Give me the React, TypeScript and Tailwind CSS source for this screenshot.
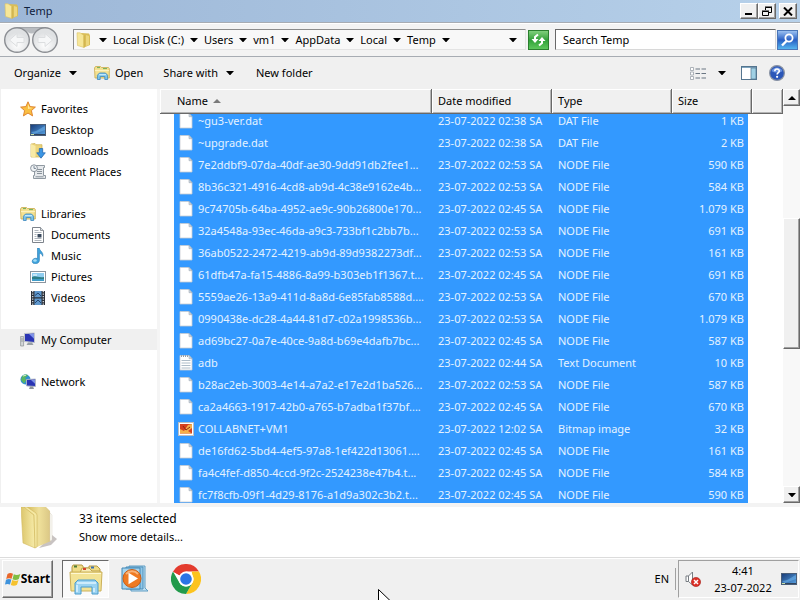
import { useEffect, useRef, type ReactNode } from "react";
import clsx from "clsx";

const raised =
  "bg-[#f0f0f0] border border-t-white border-l-white border-r-[#696969] border-b-[#696969] shadow-[inset_-1px_-1px_0_#a0a0a0]";

// --- Icons ---

const Caret = ({ dir = "down" }: { dir?: "down" | "up" }) => (
  <svg width="8" height="4" viewBox="0 0 8 4" className="shrink-0" aria-hidden>
    <path d={dir === "down" ? "M0 0h8L4 4.4z" : "M4 0l4 4H0z"} fill="#000" />
  </svg>
);

const SmallFolderIcon = () => (
  <svg width="15" height="16" viewBox="0 0 15 16" className="shrink-0" aria-hidden>
    <path d="M5 1l8 .5 1 2V13l-6 2.500z" fill="#d9bd58" />
    <path d="M10 3l3 1v9l-3 1z" fill="#ecd67c" />
    <path d="M1 .8h3L8 3.500v12L1.500 13.500z" fill="#f6e698" stroke="#dbc264" strokeWidth=".6" />
    <path d="M8 3.500v12" stroke="#c9a93f" strokeWidth=".8" />
  </svg>
);

const LargeFolderIcon = () => (
  <svg width="36" height="43" viewBox="0 0 36 43" className="shrink-0" aria-hidden>
    <defs>
      <linearGradient id="folderBack" x1="0" x2="1">
        <stop offset="0" stopColor="#d6bc5c" />
        <stop offset=".5" stopColor="#efe09a" />
        <stop offset="1" stopColor="#d9c583" />
      </linearGradient>
      <linearGradient id="folderFront" x1="0" x2="1">
        <stop offset="0" stopColor="#dcc66c" />
        <stop offset="1" stopColor="#f7ecaa" />
      </linearGradient>
    </defs>
    <path d="M18 41l12-3 6-6-5-4z" fill="#867a78" opacity=".45" />
    <path d="M6 0h19l4 4 1 30-14 6z" fill="url(#folderBack)" />
    <path d="M29 6l2 2v25l-2 1z" fill="#fbfbf6" stroke="#d3cdbd" strokeWidth=".4" />
    <path d="M0 0h3l10 8 1 33L2 36z" fill="url(#folderFront)" stroke="#d3bb60" strokeWidth=".6" />
    <path d="M6 0l9 6 1 2v32l-2 1-1-33L3 0z" fill="#f5e8a2" stroke="#cbb157" strokeWidth=".5" />
  </svg>
);

const LibraryIcon = () => (
  <svg width="16" height="16" viewBox="0 0 16 16" className="shrink-0" aria-hidden>
    <path d="M.5 3l1-1.5h5l1 1h7l.8 1V13H1z" fill="#f4e191" stroke="#c8ab4c" strokeWidth=".8" />
    <path d="M3 2.6h3M9 3.6h4" stroke="#6fae5b" strokeWidth="1" />
    <path d="M1 5.6h14" stroke="#fff6c4" />
    <path d="M3.4 14.5v-4.3L5.5 8h6l2.1 2.2v4.3h-2.8v-3H6.2v3z" fill="#7cc4ea" stroke="#3a86bd" strokeWidth=".8" />
    <path d="M5 9.7h7" stroke="#d3f0ff" />
  </svg>
);

const StarIcon = () => (
  <svg width="16" height="16" viewBox="0 0 16 16" className="shrink-0" aria-hidden>
    <path d="M8 .8l2.1 4.8 5.3.5-4 3.5 1.2 5.3L8 12.1l-4.6 2.8 1.2-5.3-4-3.5 5.3-.5z" fill="#f9bf42" stroke="#dd7d26" strokeWidth=".9" />
    <path d="M8 3l1.4 3.6 3.3.4L8 8z" fill="#ffeaa0" />
  </svg>
);

const DesktopIcon = () => (
  <svg width="16" height="12" viewBox="0 0 16 12" className="shrink-0" aria-hidden>
    <defs>
      <linearGradient id="desk" x1="0" x2="1" y2="1">
        <stop offset="0" stopColor="#173a76" />
        <stop offset="1" stopColor="#5aa5e6" />
      </linearGradient>
    </defs>
    <rect x=".5" y=".5" width="15" height="11" fill="url(#desk)" stroke="#4a5e78" />
    <path d="M1 8C6 8 9 5 15 2v4L4 10z" fill="#6cb0ea" opacity=".6" />
    <path d="M1 10.5h14" stroke="#31435c" />
    <path d="M1 10.5h3" stroke="#c8e0a8" />
  </svg>
);

const DownloadsIcon = () => (
  <svg width="16" height="16" viewBox="0 0 16 16" className="shrink-0" aria-hidden>
    <path d="M1 1l4-.5 1 1.2h6V14H1z" fill="#ecd57c" stroke="#cdb052" strokeWidth=".7" />
    <path d="M1 1l4.5 2v12L1 13.5z" fill="#f8eaa6" />
    <path d="M9.3 5.5h3.4v4.3h2.6L11 15.2 6.7 9.8h2.6z" fill="#3b96e4" stroke="#1c62ad" strokeWidth=".7" />
  </svg>
);

const RecentIcon = () => (
  <svg width="16" height="16" viewBox="0 0 16 16" className="shrink-0" aria-hidden>
    <path d="M4.5 1.5h10v2h-1v8h2v3h-12v-3h1z" fill="#e6e9ec" stroke="#858e97" strokeWidth=".9" />
    <path d="M7 5.5h5M7 7.5h5M7 9.5h5M5.5 12.8h8" stroke="#7f8992" strokeWidth=".9" />
    <circle cx="4" cy="4.2" r="3.4" fill="#f1f4f6" stroke="#8b949d" />
    <path d="M4 2v2.4h2" stroke="#5e6f80" strokeWidth=".8" fill="none" />
  </svg>
);

const DocumentsIcon = () => (
  <svg width="16" height="16" viewBox="0 0 16 16" className="shrink-0" aria-hidden>
    <path d="M2.5.5h8l3 3v12h-11z" fill="#fff" stroke="#7d838b" />
    <path d="M10.500 .5v3h3" fill="#d8dde2" stroke="#7d838b" strokeWidth=".8" />
    <path d="M4.500 3.500h4M4.500 5.500h7M4.500 7.500h2M4.500 9.500h2M4.500 11.500h7M4.500 13.500h7" stroke="#9aa3ac" strokeWidth=".8" />
    <path d="M7.500 7h4v3.500h-4z" fill="#3a4a5e" />
  </svg>
);

const MusicIcon = () => (
  <svg width="16" height="16" viewBox="0 0 16 16" className="shrink-0" aria-hidden>
    <path d="M7.500 0h1.700c.3 3 4.600 4 3.500 8.300-.4-2-1.700-2.700-3.300-3v6.900c0 4.200-7 4.700-7.200 1.300-.1-2.700 3-3.800 5.300-3z" fill="#3fa3dc" stroke="#2578b4" strokeWidth=".6" />
    <ellipse cx="5" cy="12.500" rx="1.800" ry="1.200" fill="#a3ddf7" />
  </svg>
);

const PicturesIcon = () => (
  <svg width="16" height="14" viewBox="0 0 16 14" className="shrink-0" aria-hidden>
    <rect x=".5" y="1.500" width="15" height="11" fill="#fff" stroke="#8b959f" />
    <rect x="2" y="3" width="12" height="8" fill="#8fcdf0" />
    <path d="M2 7c4-2 6 1 12 0v4H2z" fill="#2e7f88" />
    <path d="M2 9h12v2H2z" fill="#3f9cc8" />
    <path d="M3 5h4" stroke="#fff" />
  </svg>
);

const VideosIcon = () => (
  <svg width="16" height="16" viewBox="0 0 16 16" className="shrink-0" aria-hidden>
    <rect x="1" y="1" width="14" height="14" fill="#2b3038" />
    <path d="M2.700 1v14M13.300 1v14" stroke="#d6dbe0" strokeWidth="1.300" strokeDasharray="1.300 1.200" />
    <path d="M4.500 1h7v6.300h-7zM4.500 8.500h7V15h-7z" fill="#5f97cc" />
    <path d="M5 5.500L8 3l3 3M5 13l3-3 3 3" stroke="#24466e" fill="none" />
  </svg>
);

const ComputerIcon = () => (
  <svg width="16" height="16" viewBox="0 0 16 16" className="shrink-0" aria-hidden>
    <path d="M.6 4.500h3v9.500h-3z" fill="#d3d6d8" stroke="#8b9094" strokeWidth=".7" />
    <path d="M1 7h2M1 9h2" stroke="#6f757a" strokeWidth=".6" />
    <path d="M4.500 1.500l10-.5v9.500l-10-1z" fill="#2a34b4" stroke="#c0c5cc" />
    <path d="M9 2l5-.3v5z" fill="#7e92e8" />
    <path d="M8 10.500h4l1.500 2.500h-7z" fill="#989fa6" />
  </svg>
);

const NetworkIcon = () => (
  <svg width="16" height="16" viewBox="0 0 16 16" className="shrink-0" aria-hidden>
    <circle cx="5.500" cy="5.500" r="5" fill="#2f8fd0" />
    <path d="M2 2.500C4 0 7 0 8 1.500L5 4l1.500 2L4 9.500 1 6z" fill="#59b562" />
    <path d="M3 2l3-.8" stroke="#d5f3d2" />
    <path d="M6.500 5.500l9-.5v7.500l-9-.6z" fill="#2a34b4" stroke="#b3bac4" strokeWidth=".9" />
    <path d="M11 6l4-.3v4z" fill="#7e92e8" />
    <path d="M10 12.500h3l1 2.500H9z" fill="#8f969d" />
  </svg>
);

type FileKind = "file" | "text" | "bitmap";

const FileIcon = ({ kind }: { kind: FileKind }) => {
  if (kind === "bitmap") {
    return (
      <svg width="16" height="16" viewBox="0 0 16 16" className="shrink-0" aria-hidden>
        <rect x=".5" y="1.500" width="15" height="13" fill="#fff" stroke="#b9bdc2" />
        <rect x="2" y="3" width="12" height="9.500" fill="#d5401f" />
        <path d="M2 8l4 2 4-6 4-1v4l-4 3 4 2.500H2z" fill="#f4b04a" />
        <path d="M5 5l3 4 4-3" stroke="#8e2414" fill="none" />
      </svg>
    );
  }
  return (
    <svg width="16" height="16" viewBox="0 0 16 16" className="shrink-0" aria-hidden>
      <path d="M2 .5h9l3 3.200v11.300H2z" fill="#fff" stroke="#c8ccd2" strokeWidth=".8" />
      <path d="M11 .5v3.200h3z" fill="#cfd9e4" stroke="#a3abb5" strokeWidth=".6" />
      {kind === "text" && (
        <>
          <path d="M3.500 5.500h9M3.500 8h9M3.500 10.500h9M3.500 13h9" stroke="#a5b4c2" strokeWidth=".9" />
          <path d="M3 1.200h8" stroke="#707a85" strokeWidth="1.200" strokeDasharray="1 1" />
        </>
      )}
    </svg>
  );
};

const NavArrows = () => (
  <svg width="56" height="28" viewBox="0 0 56 28" aria-hidden>
    <defs>
      <radialGradient id="orb" cy=".7">
        <stop offset="0" stopColor="#fff" />
        <stop offset="1" stopColor="#dfe1e3" />
      </radialGradient>
    </defs>
    <path d="M14 1.500h29c-8 0-10 6-14.500 6S22 1.500 14 1.500z" fill="#b9bcc0" />
    <path d="M14 1.500h29" stroke="#a5a8ac" />
    <circle cx="14" cy="14" r="12.300" fill="url(#orb)" stroke="#8b8e93" strokeWidth="1.400" />
    <circle cx="42" cy="14" r="12.300" fill="url(#orb)" stroke="#8b8e93" strokeWidth="1.400" />
    <path d="M6.500 14L14 7.500v4h7v5h-7v4zM49.500 14L42 7.500v4h-7v5h7v4z" fill="#f6f7f8" stroke="#dcdee0" />
  </svg>
);

const WindowsFlag = () => (
  <svg width="16" height="15" viewBox="0 0 16 15" className="shrink-0" aria-hidden>
    <path d="M2.500 2C4.500.8 6 .8 8 1.800L6.600 6.800C4.800 6 3 6 1.200 7z" fill="#e8672b" />
    <path d="M8.800 2.200c2 1 4 1 6.500-.2L13.800 7c-2 1.200-4.300 1.200-6.300.2z" fill="#7fbd42" />
    <path d="M1 7.800c1.700-1 3.600-1 5.400-.2L5 12.600c-1.800-1-3.500-.8-5 0z" fill="#3f93dc" />
    <path d="M7.200 8c2 1 4.200 1 6.300-.1L12 12.800c-2 1.200-4.200 1.200-6.200.2z" fill="#f5c22e" />
  </svg>
);

const ExplorerIcon = () => (
  <svg width="34" height="32" viewBox="0 0 34 32" aria-hidden>
    <path d="M3 9V4l1-2h9l2 3h5V3h8l3 3v5H3z" fill="#efdc86" stroke="#b79a45" />
    <path d="M11 10l2-5h7l3 3h8v3H11z" fill="#f7ecb4" stroke="#bfa24b" />
    <path d="M5 3.500h3" stroke="#4c7d36" strokeWidth="2" />
    <path d="M14 6h3" stroke="#d5432c" strokeWidth="2" />
    <path d="M22 4.500h3" stroke="#3a71b4" strokeWidth="2" />
    <path d="M1 9h32l-1 19H2z" fill="#f3e395" stroke="#cbb05a" />
    <path d="M2 10.500h30" stroke="#fff8d2" />
    <path d="M6 31V20l3-3h17l3 3v11h-6v-7H12v7z" fill="#9bd3f1" stroke="#4a9ccc" />
    <path d="M8 20h19M8 22v7M25 25v4" stroke="#e0f5ff" strokeWidth="1.500" />
  </svg>
);

const MediaPlayerIcon = () => (
  <svg width="30" height="28" viewBox="0 0 30 28" aria-hidden>
    <path d="M8 1h16v22l3 3H10z" fill="#bfe0f2" stroke="#5e9dc4" />
    <path d="M5 2h17v22H5z" fill="#92c8e8" stroke="#4c8fbb" />
    <path d="M1 3h18v21H1z" fill="#a7d5ef" stroke="#4388b6" />
    <circle cx="11" cy="13.500" r="9" fill="#ef7a22" stroke="#c95d16" />
    <path d="M5 9a8 8 0 0112 0" stroke="#f9b277" strokeWidth="2" fill="none" />
    <path d="M7.500 7.800L17 13.500l-9.500 5.700z" fill="#fff" />
  </svg>
);

const ChromeIcon = () => (
  <svg width="30" height="30" viewBox="0 0 48 48" aria-hidden>
    <circle cx="24" cy="24" r="24" fill="#fff" />
    <path d="M3.200 12A24 24 0 0144.800 12H24a12 12 0 00-10.400 6z" fill="#e33b2e" />
    <path d="M44.800 12A24 24 0 0124 48l10.400-18A12 12 0 0034.400 18L33 12z" fill="#fcc31e" />
    <path d="M24 48A24 24 0 013.200 12l10.400 18A12 12 0 0034.400 30z" fill="#229a4b" />
    <path d="M3.200 12h41.600H24v6l-10.400 0z" fill="#e33b2e" />
    <circle cx="24" cy="24" r="12" fill="#fff" />
    <circle cx="24" cy="24" r="9.300" fill="#2a74e6" />
  </svg>
);

const MutedSpeakerIcon = () => (
  <svg width="16" height="16" viewBox="0 0 16 16" aria-hidden>
    <path d="M1 5h2.500L7.500 1v13L3.500 10.500H1z" fill="#fff" stroke="#777c82" />
    <path d="M3.500 5v5.500" stroke="#777c82" />
    <circle cx="11" cy="11" r="4.600" fill="#dc3027" stroke="#a81e18" strokeWidth=".6" />
    <path d="M9 9l4 4m0-4l-4 4" stroke="#fff" strokeWidth="1.500" />
  </svg>
);

const ViewIcon = () => (
  <svg width="16" height="13" viewBox="0 0 16 13" aria-hidden>
    <path d="M.5.500h3v3h-3zM.5 5h3v3h-3zM.5 9.500h3v3h-3z" fill="#fff" stroke="#9ba1a8" strokeWidth=".8" />
    <path d="M5.500 2h4.500M11.500 2H16M5.500 6.500h4.500M11.500 6.500H16M5.500 11h4.500M11.500 11H16" stroke="#6a7683" />
  </svg>
);

const PaneIcon = () => (
  <svg width="16" height="14" viewBox="0 0 16 14" aria-hidden>
    <rect x=".5" y=".5" width="15" height="13" fill="#fff" stroke="#54758f" />
    <path d="M1 1.500h14" stroke="#7fa5bf" />
    <rect x="10" y="2" width="5" height="11" fill="#9fd0e4" stroke="#54758f" strokeWidth=".7" />
  </svg>
);

const HelpIcon = () => (
  <svg width="16" height="16" viewBox="0 0 16 16" aria-hidden>
    <circle cx="8" cy="8" r="7.400" fill="#2c57b8" stroke="#8a93a3" strokeWidth="1.200" />
    <path d="M2.500 6a6 6 0 0111 0c-3 2-8 2-11 0z" fill="#6c93e0" />
    <path d="M5.800 6.200c0-3 4.600-2.800 4.500-.2 0 1.600-2.200 1.700-2.200 3.500" stroke="#fff" strokeWidth="1.600" fill="none" />
    <circle cx="8.100" cy="11.800" r="1.100" fill="#fff" />
  </svg>
);

// --- Data ---

const crumbs = ["Local Disk (C:)", "Users", "vm1", "AppData", "Local", "Temp"];

const navGroups: {
  title: string;
  icon: ReactNode;
  active?: boolean;
  items: { label: string; icon: ReactNode }[];
}[] = [
  {
    title: "Favorites",
    icon: <StarIcon />,
    items: [
      { label: "Desktop", icon: <DesktopIcon /> },
      { label: "Downloads", icon: <DownloadsIcon /> },
      { label: "Recent Places", icon: <RecentIcon /> },
    ],
  },
  {
    title: "Libraries",
    icon: <LibraryIcon />,
    items: [
      { label: "Documents", icon: <DocumentsIcon /> },
      { label: "Music", icon: <MusicIcon /> },
      { label: "Pictures", icon: <PicturesIcon /> },
      { label: "Videos", icon: <VideosIcon /> },
    ],
  },
  { title: "My Computer", icon: <ComputerIcon />, active: true, items: [] },
  { title: "Network", icon: <NetworkIcon />, items: [] },
];

interface FileRow {
  name: string;
  time: string;
  type: string;
  size: string;
  kind?: FileKind;
}

const files: FileRow[] = [
  { name: "~gu3-ver.dat", time: "02:38", type: "DAT File", size: "1" },
  { name: "~upgrade.dat", time: "02:38", type: "DAT File", size: "2" },
  { name: "7e2ddbf9-07da-40df-ae30-9dd91db2fee1...", time: "02:53", type: "NODE File", size: "590" },
  { name: "8b36c321-4916-4cd8-ab9d-4c38e9162e4b...", time: "02:53", type: "NODE File", size: "584" },
  { name: "9c74705b-64ba-4952-ae9c-90b26800e170...", time: "02:45", type: "NODE File", size: "1.079" },
  { name: "32a4548a-93ec-46da-a9c3-733bf1c2bb7b...", time: "02:53", type: "NODE File", size: "691" },
  { name: "36ab0522-2472-4219-ab9d-89d9382273df...", time: "02:53", type: "NODE File", size: "161" },
  { name: "61dfb47a-fa15-4886-8a99-b303eb1f1367.t...", time: "02:45", type: "NODE File", size: "691" },
  { name: "5559ae26-13a9-411d-8a8d-6e85fab8588d....", time: "02:53", type: "NODE File", size: "670" },
  { name: "0990438e-dc28-4a44-81d7-c02a1998536b...", time: "02:53", type: "NODE File", size: "1.079" },
  { name: "ad69bc27-0a7e-40ce-9a8d-b69e4dafb7bc...", time: "02:45", type: "NODE File", size: "587" },
  { name: "adb", time: "02:44", type: "Text Document", size: "10", kind: "text" },
  { name: "b28ac2eb-3003-4e14-a7a2-e17e2d1ba526...", time: "02:53", type: "NODE File", size: "587" },
  { name: "ca2a4663-1917-42b0-a765-b7adba1f37bf....", time: "02:45", type: "NODE File", size: "670" },
  { name: "COLLABNET+VM1", time: "12:02", type: "Bitmap image", size: "32", kind: "bitmap" },
  { name: "de16fd62-5bd4-4ef5-97a8-1ef422d13061....", time: "02:45", type: "NODE File", size: "161" },
  { name: "fa4c4fef-d850-4ccd-9f2c-2524238e47b4.t...", time: "02:45", type: "NODE File", size: "584" },
  { name: "fc7f8cfb-09f1-4d29-8176-a1d9a302c3b2.t...", time: "02:45", type: "NODE File", size: "590" },
];

// --- Window parts ---

const TitleBar = () => (
  <header className="flex h-[22px] shrink-0 items-center bg-linear-to-r from-[#9db7d7] to-[#b7d1ea] pr-[3px] pl-1">
    <SmallFolderIcon />
    <h1 className="ml-[5px] flex-1 text-[#10203c]">Temp</h1>
    <button aria-label="Minimize" className={clsx(raised, "flex h-4 w-[18px] items-end justify-center pb-[2px]")}>
      <svg width="8" height="3" aria-hidden>
        <path d="M0 0h7v2H0z" />
      </svg>
    </button>
    <button aria-label="Restore" className={clsx(raised, "flex h-4 w-[18px] items-center justify-center")}>
      <svg width="12" height="11" viewBox="0 0 12 11" fill="none" stroke="#000" aria-hidden>
        <path d="M4.500 4V1.500h6v5H8M4 1h7" />
        <path d="M1.500 5.500h6v4h-6zM1 5h7" />
      </svg>
    </button>
    <button aria-label="Close" className={clsx(raised, "ml-[3px] flex h-4 w-[18px] items-center justify-center")}>
      <svg width="10" height="9" viewBox="0 0 10 9" aria-hidden>
        <path d="M1 .5l8 8m0-8l-8 8" stroke="#000" strokeWidth="2" />
      </svg>
    </button>
  </header>
);

const AddressRow = () => (
  <div className="flex h-[35px] shrink-0 items-center border-y border-[#a7acb3] bg-[#f3f3f3] pr-[2px] pl-[3px] shadow-[inset_0_1px_0_#fff]">
    <button aria-label="Back and forward" className="mr-[14px] shrink-0">
      <NavArrows />
    </button>
    <nav
      aria-label="Address"
      className="flex h-[21px] flex-1 items-center gap-[6px] border border-[#e4e4e4] border-t-[#8c8c8c] border-l-[#8c8c8c] bg-[#f8f8f8] pr-2 pl-[2px]"
    >
      <SmallFolderIcon />
      <span className="flex w-[10px] justify-end">
        <Caret />
      </span>
      {crumbs.map((crumb) => (
        <a key={crumb} href="#" className="flex items-center gap-[6px] whitespace-nowrap">
          {crumb}
          <Caret />
        </a>
      ))}
      <button aria-label="Previous locations" className="ml-auto">
        <Caret />
      </button>
    </nav>
    <button
      aria-label="Refresh"
      className="ml-[2px] flex h-5 w-[21px] items-center justify-center border border-[#2b7f2f] bg-linear-to-b from-[#7fd07c] via-[#2fa038] to-[#5cc85c]"
    >
      <svg width="17" height="14" viewBox="0 0 17 14" aria-hidden>
        <path d="M8 1.500L5 4v3M9 12.500l3-2.500V7" fill="none" stroke="#fff" strokeWidth="2" />
        <path d="M1.500 6h7L5 10zM8.500 8h7L12 4z" fill="#fff" />
      </svg>
    </button>
    <input
      aria-label="Search Temp"
      placeholder="Search Temp"
      className="ml-[6px] h-[21px] w-[221px] border border-[#d8d8d8] border-t-[#696969] border-l-[#696969] bg-white pl-[7px] placeholder:text-black"
    />
    <button
      aria-label="Search"
      className="ml-px flex h-5 w-[21px] items-center justify-center border border-[#4a76b8] bg-linear-to-b from-[#9cc1f0] via-[#2a5fc4] to-[#56b4ee]"
    >
      <svg width="15" height="14" viewBox="0 0 15 14" fill="none" stroke="#fff" aria-hidden>
        <circle cx="9" cy="5" r="3.600" strokeWidth="1.800" />
        <path d="M6.500 8L2 12.500" strokeWidth="2.400" />
      </svg>
    </button>
  </div>
);

const Toolbar = () => (
  <div className="flex h-8 shrink-0 items-center bg-[#f0f0f0] pr-[15px] pl-[14px]">
    <button className="flex items-center gap-2">
      Organize
      <Caret />
    </button>
    <button className="ml-[17px] flex items-center gap-[5px]">
      <LibraryIcon />
      Open
    </button>
    <button className="ml-5 flex items-center gap-2">
      Share with
      <Caret />
    </button>
    <button className="ml-[22px]">New folder</button>
    <div className="ml-auto flex items-center">
      <button aria-label="Change your view">
        <ViewIcon />
      </button>
      <button aria-label="More view options" className="ml-3">
        <Caret />
      </button>
      <button aria-label="Show the preview pane" className="ml-[15px]">
        <PaneIcon />
      </button>
      <button aria-label="Get help" className="ml-3">
        <HelpIcon />
      </button>
    </div>
  </div>
);

const Sidebar = () => (
  <aside className="flex w-40 shrink-0 flex-col gap-[21px] overflow-hidden border-r-3 border-l border-r-[#f5f5f5] border-l-[#f0f0f0] bg-white pt-[9px]">
    {navGroups.map((group) => (
      <ul key={group.title}>
        <li>
          <a
            href="#"
            className={clsx("flex h-[21px] items-center gap-[5px] pl-[19px]", group.active && "bg-[#f0f0f0]")}
          >
            {group.icon}
            {group.title}
          </a>
        </li>
        {group.items.map((item) => (
          <li key={item.label}>
            <a href="#" className="flex h-[21px] items-center gap-[5px] pl-[29px]">
              {item.icon}
              {item.label}
            </a>
          </li>
        ))}
      </ul>
    ))}
  </aside>
);

const headCell =
  "h-[25px] border-r border-b border-r-[#696969] border-b-[#696969] bg-[#f0f0f0] pl-[6px] text-left font-normal shadow-[inset_1px_1px_0_#fff,inset_-1px_-1px_0_#b4b4b4]";

const FileList = () => {
  const listRef = useRef<HTMLDivElement>(null);

  useEffect(() => {
    if (listRef.current) listRef.current.scrollTop = 4;
  }, []);

  return (
    <div ref={listRef} className="min-w-0 flex-1 overflow-hidden bg-white">
      <table className="w-full table-fixed border-separate border-spacing-0">
        <thead className="sticky top-0 z-10">
          <tr>
            <th className={clsx(headCell, "pl-[17px]")}>
              <span className="flex items-center gap-[5px]">
                Name
                <svg width="8" height="4" aria-hidden>
                  <path d="M4 0l4 4H0z" fill="#7a7a7a" />
                </svg>
              </span>
            </th>
            <th className={clsx(headCell, "w-[120px]")}>Date modified</th>
            <th className={clsx(headCell, "w-[120px]")}>Type</th>
            <th className={clsx(headCell, "w-20")}>Size</th>
            <th aria-label="Spacer" className={clsx(headCell, "w-[31px]")} />
          </tr>
        </thead>
        <tbody className="text-[#e4f2ff]">
          {files.map((file) => (
            <tr key={file.name} className="h-[22px] whitespace-nowrap">
              <td className="p-0 pl-[14px]">
                <div className="flex h-[22px] items-center gap-1 overflow-hidden bg-[#3399ff] pl-1">
                  <FileIcon kind={file.kind ?? "file"} />
                  {file.name}
                </div>
              </td>
              <td className="bg-[#3399ff] p-0 pl-[6px]">23-07-2022 {file.time} SA</td>
              <td className="bg-[#3399ff] p-0 pl-[6px]">{file.type}</td>
              <td className="p-0 pr-1">
                <div className="h-[22px] bg-[#3399ff] pr-1 text-right leading-[22px]">{file.size} KB</div>
              </td>
              <td className="p-0" />
            </tr>
          ))}
        </tbody>
      </table>
    </div>
  );
};

const ScrollBar = () => (
  <div className="flex w-[17px] shrink-0 flex-col bg-[#f8f8f8]">
    <button aria-label="Scroll up" className={clsx(raised, "flex h-[17px] items-center justify-center")}>
      <Caret dir="up" />
    </button>
    <div className="grow-[113]" />
    <div className={clsx(raised, "grow-[129]")} />
    <div className="grow-[138]" />
    <button aria-label="Scroll down" className={clsx(raised, "flex h-[17px] items-center justify-center")}>
      <Caret />
    </button>
  </div>
);

const DetailsPane = () => (
  <section className="flex h-[54px] shrink-0 items-start gap-[22px] border-t-4 border-[#f3f3f3] bg-white pl-[21px]">
    <LargeFolderIcon />
    <div className="pt-[3px]">
      <p className="text-[12px] leading-[18px]">33 items selected</p>
      <a href="#" className="block leading-[18px]">
        Show more details...
      </a>
    </div>
  </section>
);

const Taskbar = () => (
  <footer className="flex h-[43px] shrink-0 items-center border-t border-[#dcdcdc] bg-[#f0f0f0] pr-px pl-[2px] shadow-[inset_0_1px_0_#fff]">
    <button className={clsx(raised, "flex h-[38px] w-[51px] items-center justify-center text-[12px] font-bold")}>
      <WindowsFlag />
      Start
    </button>
    <button
      aria-label="Windows Explorer"
      className="ml-[9px] flex h-[38px] w-[47px] items-center justify-center border border-white border-t-[#696969] border-l-[#696969] bg-[#fafafa]"
    >
      <ExplorerIcon />
    </button>
    <button aria-label="Windows Media Player" className="ml-3">
      <MediaPlayerIcon />
    </button>
    <button aria-label="Google Chrome" className="ml-5">
      <ChromeIcon />
    </button>
    <button className="ml-auto">EN</button>
    <div className="ml-[6px] h-[22px] w-px bg-[#a0a0a0]" />
    <div className="ml-[2px] flex h-[38px] items-center border border-white border-t-[#a0a0a0] border-l-[#a0a0a0] pr-px pl-[6px]">
      <button aria-label="Speakers: muted">
        <MutedSpeakerIcon />
      </button>
      <time className="mr-[6px] ml-[10px] w-[64px] text-center leading-[17px]">
        4:41
        <br />
        23-07-2022
      </time>
      <button aria-label="Show desktop">
        <DesktopIcon />
      </button>
    </div>
  </footer>
);

export default function App() {
  return (
    <div className="relative flex h-screen flex-col overflow-hidden bg-[#f0f0f0] font-['Noto_Sans','Open_Sans',sans-serif] text-[11px] leading-4 text-black">
      <TitleBar />
      <AddressRow />
      <Toolbar />
      <main className="flex min-h-0 flex-1">
        <Sidebar />
        <FileList />
        <ScrollBar />
      </main>
      <DetailsPane />
      <Taskbar />
      {/* Mouse pointer */}
      <svg
        width="13"
        height="20"
        viewBox="0 0 13 20"
        className="pointer-events-none absolute top-[589px] left-[378px]"
        aria-hidden
      >
        <path d="M.5.500v16l4-4 3 6 2-1-3-6h5.500z" fill="#fff" stroke="#000" />
      </svg>
    </div>
  );
}
